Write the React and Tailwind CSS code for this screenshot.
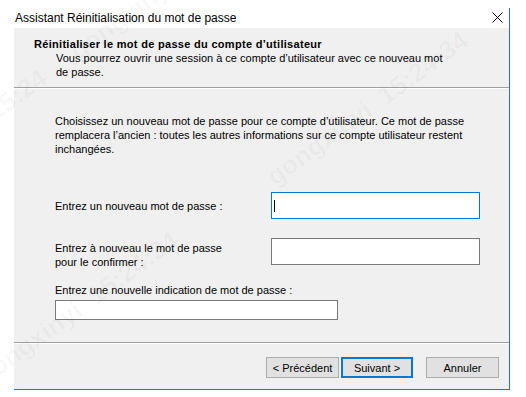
export default function App() {
  return (
    <div className="relative w-[526px] h-[397px] overflow-hidden bg-white pt-[8px] text-black font-['Liberation_Sans',Arial,sans-serif]">
      <div className="ml-[14px] w-[496px] h-[382px] border-r border-b border-[#1979ca] flex flex-col">
        {/* Title bar */}
        <div className="h-[20px] bg-white flex items-center justify-between pl-px pr-[6px]">
          <span className="text-[12px] leading-[14px]">Assistant Réinitialisation du mot de passe</span>
          <svg width="11" height="11" viewBox="0 0 11 11" className="mt-[-1px]">
            <path d="M0.5 0.5 L10.5 10.5 M10.5 0.5 L0.5 10.5" stroke="#000" strokeWidth="1" fill="none" />
          </svg>
        </div>
        {/* Body */}
        <div className="flex-1 bg-[#f0f0f0] flex flex-col text-[11px]">
          {/* Header */}
          <div className="h-[59px] pt-[10px] pl-[20px]">
            <div className="font-bold leading-[13px] tracking-[0.3px]">Réinitialiser le mot de passe du compte d’utilisateur</div>
            <div className="pl-[22px] leading-[14px]">
              Vous pourrez ouvrir une session à ce compte d’utilisateur avec ce nouveau mot
              <br />
              de passe.
            </div>
          </div>
          <div className="border-t border-b border-t-[#a0a0a0] border-b-white" />
          {/* Content */}
          <div className="pl-[41px] mt-[25px] leading-[14px]">
            Choisissez un nouveau mot de passe pour ce compte d’utilisateur. Ce mot de passe
            <br />
            remplacera l’ancien : toutes les autres informations sur ce compte utilisateur restent
            <br />
            inchangées.
          </div>
          <div className="pl-[41px] mt-[36px] flex items-center">
            <div className="w-[216px] leading-[14px]">Entrez un nouveau mot de passe :</div>
            <div className="w-[209px] h-[27px] bg-white border border-[#0078d7] flex items-center pl-[2px]">
              <div className="w-px h-[12px] bg-black" />
            </div>
          </div>
          <div className="pl-[41px] mt-[19px] flex items-start">
            <div className="w-[216px] leading-[14px] pt-[3px]">
              Entrez à nouveau le mot de passe
              <br />
              pour le confirmer :
            </div>
            <div className="w-[209px] h-[27px] bg-white border border-[#7a7a7a]" />
          </div>
          <div className="pl-[41px] mt-[14px] leading-[14px]">Entrez une nouvelle indication de mot de passe :</div>
          <div className="pl-[41px] mt-[3px]">
            <div className="w-[283px] h-[20px] bg-white border border-[#7a7a7a]" />
          </div>
          <div className="mt-[22px] border-t border-b border-t-[#a0a0a0] border-b-white" />
          <div className="mt-[13px] flex justify-end pr-[10px]">
            <button className="w-[73px] h-[21px] bg-[#e1e1e1] border border-[#adadad] text-[11px] leading-[14px]">&lt; Précédent</button>
            <button className="ml-[2px] w-[72px] h-[21px] bg-[#e1e1e1] border-2 border-[#0078d7] text-[11px] leading-[14px]">Suivant &gt;</button>
            <button className="ml-[13px] w-[73px] h-[21px] bg-[#e1e1e1] border border-[#adadad] text-[11px] leading-[14px]">Annuler</button>
          </div>
        </div>
      </div>
      {/* Watermark */}
      <div className="pointer-events-none absolute left-[270px] top-[160px] rotate-[-36deg] origin-left whitespace-nowrap text-[26px] font-bold text-black/[0.03]">
        gongxinyi&nbsp;&nbsp;15:24:34
      </div>
      <div className="pointer-events-none absolute left-[-20px] top-[360px] rotate-[-36deg] origin-left whitespace-nowrap text-[26px] font-bold text-black/[0.03]">
        gongxinyi&nbsp;&nbsp;15:24:34
      </div>
      <div className="pointer-events-none absolute left-[-10px] top-[95px] rotate-[-36deg] origin-left whitespace-nowrap text-[26px] font-bold text-black/[0.03]">
        15:24&nbsp;&nbsp;&nbsp;&nbsp;&nbsp;gongxinyi
      </div>
    </div>
  );
}
